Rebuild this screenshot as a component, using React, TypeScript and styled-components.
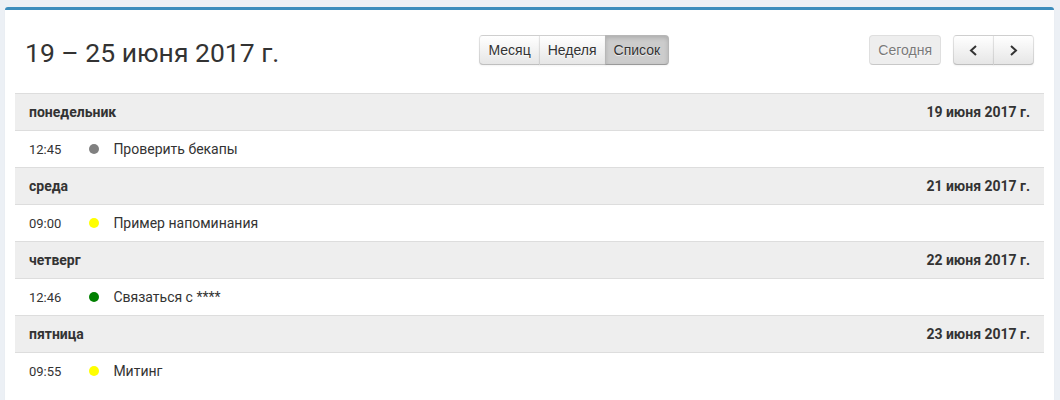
import React from "react";
import styled, { createGlobalStyle, css } from "styled-components";

const Global = createGlobalStyle`
  html, body { margin: 0; padding: 0; background: #ecf0f5; }
  body { font-family: Roboto, "Noto Sans", sans-serif; font-size: 14px; color: #333; }
  * { box-sizing: border-box; }
`;

const Page = styled.div`
  padding: 7px 6px 0 5px;
`;

const Box = styled.div`
  background: #fff;
  border-top: 3px solid #3c8dbc;
  border-radius: 3px;
  box-shadow: 0 1px 1px rgba(0, 0, 0, 0.1);
  padding: 25px 10px 20px 10px;
`;

const Toolbar = styled.div`
  display: flex;
  align-items: flex-start;
  padding: 0 10px 0 10px;
  margin-bottom: 25px;
`;

const Title = styled.h2`
  margin: 3px 0 0 0;
  font-family: Roboto, "Noto Sans", sans-serif;
  font-weight: 400;
  font-size: 26.5px;
  line-height: 30px;
  color: #333;
  white-space: nowrap;
`;

const Center = styled.div`
  flex: 1;
  display: flex;
  justify-content: center;
`;

const Right = styled.div`
  display: flex;
  gap: 12px;
`;

const Group = styled.div`
  display: flex;
`;

const Button = styled.button<{ $active?: boolean; $disabled?: boolean; $first?: boolean; $last?: boolean; $w?: number }>`
  font-family: "Liberation Sans", Arial, sans-serif;
  font-size: 14px;
  height: 30px;
  padding: 0 8px;
  margin: 0;
  color: #333;
  cursor: pointer;
  border: 1px solid;
  border-color: rgba(0, 0, 0, 0.1) rgba(0, 0, 0, 0.1) rgba(0, 0, 0, 0.25);
  background-color: #f5f5f5;
  background-image: linear-gradient(to bottom, #fff, #e6e6e6);
  text-shadow: 0 1px 1px rgba(255, 255, 255, 0.75);
  box-shadow: inset 0 1px 0 rgba(255, 255, 255, 0.2), 0 1px 2px rgba(0, 0, 0, 0.05);
  border-radius: 0;
  display: flex;
  align-items: center;
  justify-content: center;
  ${(p) => p.$w && css`width: ${p.$w}px;`}
  & + & { margin-left: -1px; }
  ${(p) => p.$first && css`border-top-left-radius: 4px; border-bottom-left-radius: 4px;`}
  ${(p) => p.$last && css`border-top-right-radius: 4px; border-bottom-right-radius: 4px;`}
  ${(p) =>
    p.$active &&
    css`
      background-color: #ccc;
      background-image: none;
      box-shadow: inset 0 2px 4px rgba(0, 0, 0, 0.15), 0 1px 2px rgba(0, 0, 0, 0.05);
    `}
  ${(p) =>
    p.$disabled &&
    css`
      cursor: default;
      background-color: #e6e6e6;
      background-image: none;
      opacity: 0.65;
      box-shadow: none;
    `}
`;

const List = styled.div`
  display: flex;
  flex-direction: column;
`;

const Row = styled.div<{ $heading?: boolean }>`
  display: flex;
  align-items: center;
  height: 37px;
  border-top: 1px solid #ddd;
  padding: 0 14px;
  background: ${(p) => (p.$heading ? "#eee" : "#fff")};
  font-weight: ${(p) => (p.$heading ? 700 : 400)};
  justify-content: ${(p) => (p.$heading ? "space-between" : "flex-start")};
  color: #333;
`;

const Time = styled.span`
  white-space: nowrap;
  font-size: 13px;
  padding-right: 14px;
  min-width: 46px;
`;

const Dot = styled.span<{ $color: string }>`
  width: 10px;
  height: 10px;
  border-radius: 50%;
  background: ${(p) => p.$color};
  margin: 0 14px;
  flex: none;
`;

const EventTitle = styled.span`
  color: #333;
`;

const Chevron = ({ dir }: { dir: "left" | "right" }) => (
  <svg width="9" height="11" viewBox="0 0 9 11">
    <polyline
      points={dir === "left" ? "7,1 2,5.5 7,10" : "2,1 7,5.5 2,10"}
      fill="none"
      stroke="#333"
      strokeWidth="2"
    />
  </svg>
);

const days = [
  { day: "понедельник", date: "19 июня 2017 г.", time: "12:45", color: "#808080", title: "Проверить бекапы" },
  { day: "среда", date: "21 июня 2017 г.", time: "09:00", color: "#ffff00", title: "Пример напоминания" },
  { day: "четверг", date: "22 июня 2017 г.", time: "12:46", color: "#008000", title: "Связаться с ****" },
  { day: "пятница", date: "23 июня 2017 г.", time: "09:55", color: "#ffff00", title: "Митинг" },
];

export default function App() {
  return (
    <Page>
      <Global />
      <Box>
        <Toolbar>
          <Title>19 – 25 июня 2017 г.</Title>
          <Center>
            <Group>
              <Button $first>Месяц</Button>
              <Button>Неделя</Button>
              <Button $last $active>Список</Button>
            </Group>
          </Center>
          <Right>
            <Button $first $last $disabled>Сегодня</Button>
            <Group>
              <Button $first $w={41}><Chevron dir="left" /></Button>
              <Button $last $w={41}><Chevron dir="right" /></Button>
            </Group>
          </Right>
        </Toolbar>
        <List>
          {days.map((d) => (
            <React.Fragment key={d.day}>
              <Row $heading>
                <span>{d.day}</span>
                <span>{d.date}</span>
              </Row>
              <Row>
                <Time>{d.time}</Time>
                <Dot $color={d.color} />
                <EventTitle>{d.title}</EventTitle>
              </Row>
            </React.Fragment>
          ))}
        </List>
      </Box>
    </Page>
  );
}
